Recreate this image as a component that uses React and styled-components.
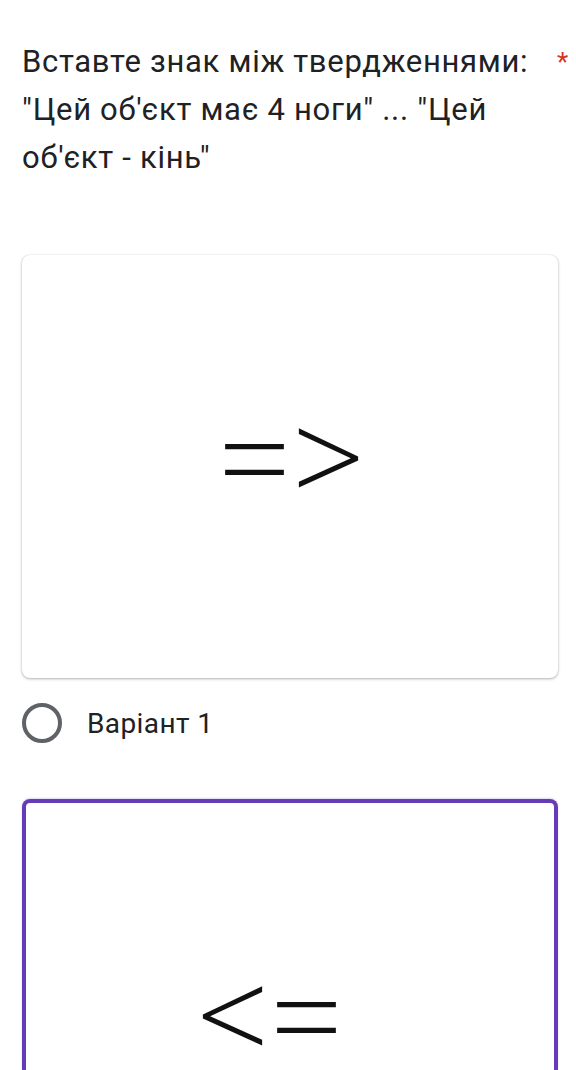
import styled, { createGlobalStyle } from "styled-components";

const GlobalStyle = createGlobalStyle`
  body {
    margin: 0;
    background: #fff;
    font-family: Roboto, "Noto Sans", sans-serif;
    color: #202124;
  }
`;

const Page = styled.div`
  width: 576px;
  height: 1070px;
  overflow: hidden;
  padding: 38px 0 0 22px;
  box-sizing: border-box;
`;

const TitleRow = styled.div`
  display: flex;
  align-items: flex-start;
`;

const Title = styled.div`
  width: 515px;
  font-size: 31px;
  line-height: 48px;
  letter-spacing: 0.7px;
`;

const Required = styled.span`
  color: #d93025;
  font-size: 26px;
  line-height: 48px;
  margin-left: 20px;
`;

const ImageCard = styled.div`
  width: 536px;
  height: 423px;
  box-sizing: border-box;
  margin-top: ${(p) => p.gap}px;
  border-radius: 8px;
  background: #fff;
  box-shadow: 0 1px 3px rgba(0, 0, 0, 0.3), 0 0 1px rgba(0, 0, 0, 0.15);
  display: flex;
  align-items: center;
  justify-content: center;
`;

/* selected option: purple frame, runs past the bottom of the screen */
const SelectedCard = styled.div`
  width: 536px;
  height: 271px;
  box-sizing: border-box;
  margin-top: ${(p) => p.gap}px;
  border: 4px solid #673ab7;
  border-bottom: none;
  border-radius: 8px 8px 0 0;
  background: #fff;
  box-shadow: 0 -1px 2px rgba(103, 58, 183, 0.2);
  display: flex;
  justify-content: center;
  align-items: flex-start;
  padding-top: ${(p) => p.top}px;
`;

const Symbol = styled.div`
  font-family: "Open Sans", "Liberation Sans", sans-serif;
  font-weight: 300;
  font-size: 128px;
  line-height: 0.85;
  color: #111;
  letter-spacing: 1px;
  transform: translate(${(p) => p.dx || 0}px, ${(p) => p.dy || 0}px);
`;

const OptionRow = styled.label`
  display: flex;
  align-items: center;
  gap: 25px;
  height: 40px;
  margin-top: 25px;
`;

const Radio = styled.span`
  width: 40px;
  height: 40px;
  box-sizing: border-box;
  border: 4px solid #5f6368;
  border-radius: 50%;
`;

const OptionText = styled.span`
  font-size: 28px;
  letter-spacing: 0.4px;
  color: #202124;
`;

export default function App() {
  return (
    <>
      <GlobalStyle />
      <Page>
        <TitleRow>
          <Title>
            Вставте знак між твердженнями: "Цей об'єкт має 4 ноги" ... "Цей
            об'єкт - кінь"
          </Title>
          <Required>*</Required>
        </TitleRow>
        <ImageCard gap={73}>
          <Symbol dx={2} dy={-11}>=&gt;</Symbol>
        </ImageCard>
        <OptionRow>
          <Radio />
          <OptionText>Варіант 1</OptionText>
        </OptionRow>
        <SelectedCard gap={56} top={156}>
          <Symbol dx={-20}>&lt;=</Symbol>
        </SelectedCard>
      </Page>
    </>
  );
}
